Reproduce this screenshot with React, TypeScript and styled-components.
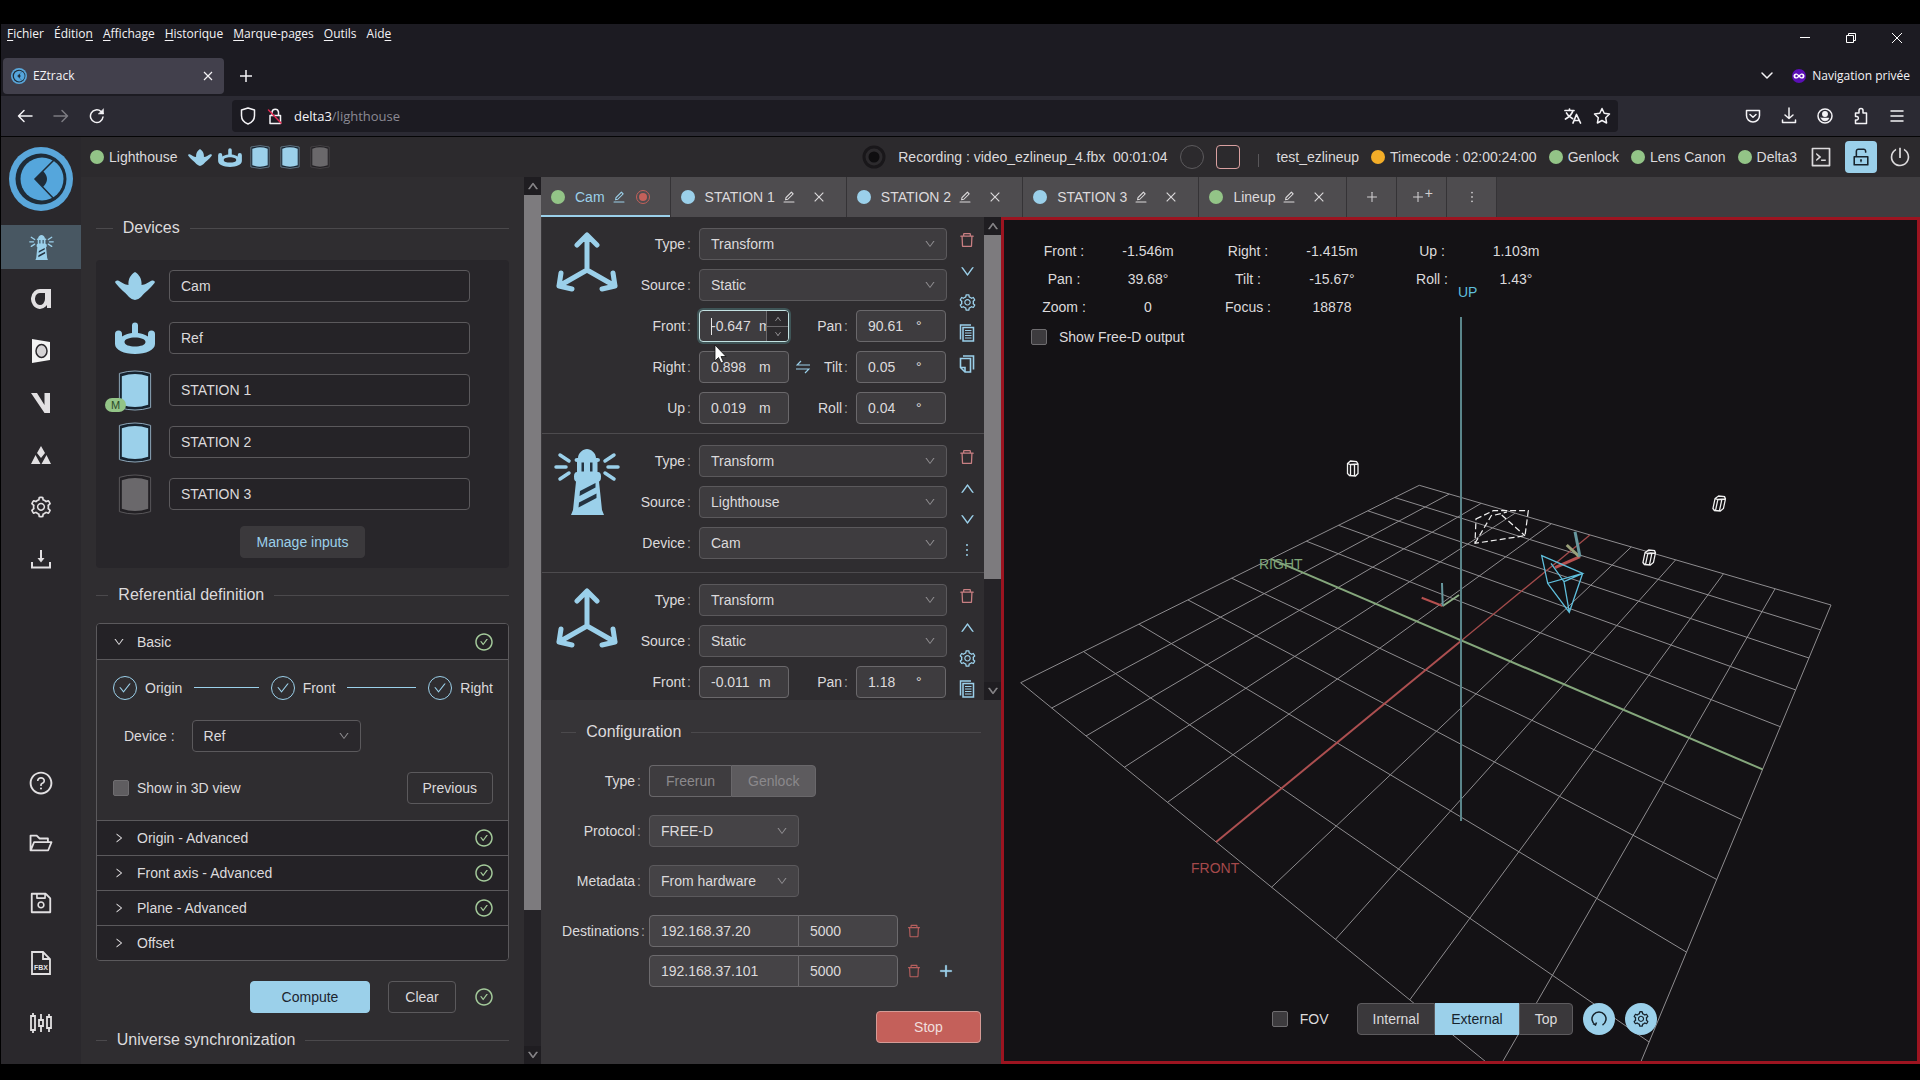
import React, { useState } from 'react';
import styled, { createGlobalStyle, css } from 'styled-components';
import {
  AiOutlineCheck, AiOutlineCheckCircle, AiOutlineClose, AiOutlineCode, AiOutlineDelete, AiOutlineDown,
  AiOutlineEdit, AiOutlineFolderOpen, AiOutlineMore, AiOutlinePlus, AiOutlinePoweroff,
  AiOutlineQuestionCircle, AiOutlineRight, AiOutlineSave, AiOutlineSetting, AiOutlineUnlock, AiOutlineUp,
} from 'react-icons/ai';

const c = {
  blue: '#9bd0ea',
  green: '#93c487',
  red: '#c4605a',
  pink: '#c97f82',
  text: '#dcdadc',
  panel: '#2f2d30',
  inset: '#28262a',
  side: '#2a282c',
  line: '#5b595c',
  field: '#3e3c3f',
  chrome: '#1c1b22',
  toolbar: '#2b2a33',
};

const GlobalStyle = createGlobalStyle`
  *, *::before, *::after { box-sizing: border-box; }
  body { margin: 0; background: #000; }
  button, input, select { font: inherit; color: inherit; margin: 0; }
  button { cursor: pointer; }
  a { color: inherit; text-decoration: none; }
`;

const Page = styled.div`
  height: 100vh;
  min-height: 720px;
  padding: 24px 0 16px 1px;
  display: flex;
  flex-direction: column;
  overflow: hidden;
  background: #000;
  color: ${c.text};
  font: 14px/20px "Liberation Sans", Arial, sans-serif;
`;

const plain = css`
  padding: 0;
  border: 0;
  background: none;
  display: inline-flex;
  align-items: center;
  justify-content: center;
`;

/* ---------- browser chrome ---------- */

const Chrome = styled.header`
  flex: none;
  background: ${c.chrome};
  color: #f4f3f6;
  font: 12px/16px "Open Sans", "Noto Sans", sans-serif;
`;
const MenuBar = styled.div`
  height: 32px;
  display: flex;
  justify-content: space-between;
`;
const Menus = styled.nav`
  display: flex;
  gap: 10px;
  padding: 2px 0 0 6px;
`;
const MenuButton = styled.button`
  ${plain}
  height: 16px;
  display: block;
  u { text-underline-offset: 2px; }
`;
const WindowButtons = styled.div`
  display: flex;
  button { ${plain} width: 46px; height: 28px; }
`;
const TabStrip = styled.div`
  height: 40px;
  display: flex;
  align-items: center;
  padding-left: 2px;
`;
const BrowserTab = styled.div`
  width: 221px;
  height: 36px;
  display: flex;
  align-items: center;
  gap: 6px;
  padding: 0 9px 0 8px;
  border-radius: 4px;
  background: #42404c;
  span { flex: 1; }
`;
const BareButton = styled.button`
  ${plain}
`;
const NewTab = styled(BareButton)`
  width: 32px;
  margin-left: 6px;
`;
const Private = styled.div`
  margin-left: auto;
  padding-right: 10px;
  display: flex;
  align-items: center;
  gap: 6px;
  button { margin-right: 12px; }
`;
const NavBar = styled.div`
  height: 41px;
  display: flex;
  align-items: center;
  background: ${c.toolbar};
  border-bottom: 1px solid #050506;
`;
const NavButtons = styled.div`
  width: 231px;
  display: flex;
  gap: 16px;
  padding-left: 14px;
`;
const NavButton = styled.button<{ $dim?: boolean }>`
  ${plain}
  width: 20px;
  height: 20px;
  opacity: ${p => (p.$dim ? 0.4 : 1)};
`;
const UrlBar = styled.div`
  flex: 1;
  height: 32px;
  display: flex;
  align-items: center;
  gap: 11px;
  padding: 0 7px 0 8px;
  border-radius: 4px;
  background: ${c.chrome};
  font-size: 13px;
  p { margin: 0; flex: 1; color: #8b8a94; }
  b { font-weight: 400; color: #f4f3f6; }
`;
const Extensions = styled.div`
  width: 302px;
  display: flex;
  gap: 16px;
  justify-content: flex-end;
  padding-right: 13px;
`;

/* ---------- app frame ---------- */

const AppFrame = styled.div`
  flex: 1;
  min-height: 0;
  display: flex;
  background: ${c.panel};
`;
const Sidebar = styled.nav`
  flex: none;
  width: 80px;
  display: flex;
  flex-direction: column;
  background: ${c.side};
`;
const Logo = styled.a`
  height: 84px;
  display: grid;
  place-items: center;
  margin-bottom: 4px;
`;
const SideItem = styled.a<{ $active?: boolean; $tall?: boolean }>`
  height: ${p => (p.$tall ? 60 : 52)}px;
  display: grid;
  place-items: center;
  color: #e2e0e2;
  ${p => p.$active && css`height: 44px; margin-bottom: 4px; color: ${c.blue}; background: #485762;`}
`;
const SideBottom = styled.div`
  margin-top: auto;
  padding-bottom: 11px;
`;
const Content = styled.div`
  flex: 1;
  min-width: 0;
  display: flex;
  flex-direction: column;
`;
const StatusBar = styled.div`
  flex: none;
  height: 40px;
  display: flex;
  align-items: center;
  justify-content: space-between;
  padding: 0 9px;
  background: #2c2a2d;
`;
const StatusGroup = styled.div<{ $gap: number }>`
  display: flex;
  align-items: center;
  gap: ${p => p.$gap}px;
`;
const DeviceSlot = styled.span`
  width: 24px;
  display: grid;
  place-items: center;
`;
const Dot = styled.i<{ $color: string }>`
  flex: none;
  width: 14px;
  height: 14px;
  border-radius: 50%;
  background: ${p => p.$color};
`;
const Status = styled.span<{ $lead?: boolean }>`
  display: flex;
  align-items: center;
  gap: 5px;
  margin-right: ${p => (p.$lead ? 4 : 0)}px;
`;
const RoundRec = styled.button`
  ${plain}
  width: 24px;
  height: 24px;
  border: 1px solid #5c5a5d;
  border-radius: 50%;
`;
const StopRec = styled(RoundRec)`
  border-color: #d9a0a0;
  border-radius: 4px;
`;
const Separator = styled.i`
  width: 1px;
  height: 13px;
  margin: 6px 6px 0;
  background: #59575a;
`;
const LockButton = styled.button`
  ${plain}
  width: 32px;
  height: 32px;
  border-radius: 4px;
  background: ${c.blue};
  color: #17232c;
`;
const Columns = styled.main`
  flex: 1;
  min-height: 0;
  display: flex;
`;

/* ---------- shared controls ---------- */

const ScrollRail = styled.div`
  flex: none;
  width: 17px;
  display: flex;
  flex-direction: column;
  justify-content: space-between;
  background: #252327;
  color: #8d8b8e;
  button { ${plain} height: 18px; background: #1f1d21; }
`;
const Track = styled.div`
  flex: 1;
`;
const Thumb = styled.div<{ $size: number }>`
  height: ${p => p.$size}%;
  background: #7d7b7e;
`;
const Rail = ({ size }: { size: number }) => (
  <ScrollRail>
    <button aria-label="Scroll up"><AiOutlineUp size={12} strokeWidth={60} /></button>
    <Track><Thumb $size={size} /></Track>
    <button aria-label="Scroll down"><AiOutlineDown size={12} strokeWidth={60} /></button>
  </ScrollRail>
);

const Divider = styled.h2`
  margin: 0;
  height: 24px;
  display: flex;
  align-items: center;
  gap: 10px;
  font: 16px/24px "Liberation Sans", Arial, sans-serif;
  white-space: nowrap;
  &::before, &::after { content: ''; height: 1px; background: #4b494c; }
  &::before { flex: 5 0 0; }
  &::after { flex: 95 0 0; }
`;
const box = css`
  height: 32px;
  border: 1px solid ${c.line};
  border-radius: 4px;
`;
const TextInput = styled.input`
  ${box}
  width: 100%;
  min-width: 0;
  padding: 0 11px;
  background: #252327;
  outline: none;
`;
const Button = styled.button<{ $kind?: 'primary' | 'danger' | 'soft'; $width?: number }>`
  ${box}
  padding: 0 15px;
  background: transparent;
  ${p => p.$width && css`width: ${p.$width}px;`}
  ${p => p.$kind === 'primary' && css`background: ${c.blue}; border-color: ${c.blue}; color: #1b2530;`}
  ${p => p.$kind === 'soft' && css`background: #3b393c; border-color: #3b393c; color: ${c.blue};`}
  ${p => p.$kind === 'danger' && css`background: ${c.red}; border-color: #d59b96; color: #f0dedd;`}
`;
const SelectWrap = styled.span<{ $width?: number; $bg: string }>`
  position: relative;
  display: block;
  color: ${c.text};
  width: ${p => (p.$width ? `${p.$width}px` : '100%')};
  select {
    ${box}
    display: block;
    width: 100%;
    padding: 0 30px 0 11px;
    appearance: none;
    background: ${p => p.$bg};
    outline: none;
  }
  svg { position: absolute; right: 11px; top: 10px; color: #8f8d90; pointer-events: none; }
`;
const Select = ({ id, value, options, width, bg = c.field }: { id: string; value: string; options?: string[]; width?: number; bg?: string }) => (
  <SelectWrap $width={width} $bg={bg}>
    <select id={id} defaultValue={value}>
      {(options || [value]).map(o => <option key={o}>{o}</option>)}
    </select>
    <AiOutlineDown size={12} />
  </SelectWrap>
);
const CheckLabel = styled.label<{ $gap?: number; $bg?: string }>`
  display: inline-flex;
  align-items: center;
  gap: ${p => p.$gap || 8}px;
  input {
    appearance: none;
    width: 16px;
    height: 16px;
    border: 1px solid #6f6d70;
    border-radius: 2px;
    background: ${p => p.$bg || '#5f5d60'};
  }
`;
const Colon = styled.span`
  margin-left: 2px;
  color: #a3a1a4;
`;

/* ---------- drawings ---------- */

const CamIcon = ({ w }: { w: number }) => (
  <svg width={w} height={Math.round(w * 0.7)} viewBox="0 0 40 28" fill={c.blue}>
    <path d="M20 0C25 3 27 8 26.500 13C30 13 34 10 37 8.500C39 8 40.500 9.500 39.500 11C35 17 30 20 26 25Q23 28 20 28Q17 28 14 25C10 20 5 17 .5 11C-.5 9.500 1 8 3 8.500C6 10 10 13 13.500 13C13 8 15 3 20 0Z" />
  </svg>
);
const RefIcon = ({ w }: { w: number }) => (
  <svg width={w} height={Math.round(w * 0.8)} viewBox="0 0 40 32" fill={c.blue} fillRule="evenodd">
    <path d="M0 12a3.500 3.500 0 0 1 7 0v2.500C10 12.500 13 11.500 17 11V3.500a3 3 0 0 1 6 0V11C27 11.500 30 12.500 33 14.500V12a3.500 3.500 0 0 1 7 0V22C40 28 31 32 20 32S0 28 0 22ZM9.500 20c0 3 5 4.500 10.500 4.500S30.500 23 30.500 20 25.500 15.500 20 15.500 9.500 17 9.500 20Z" />
  </svg>
);
const StationIcon = ({ w, off }: { w: number; off?: boolean }) => (
  <svg width={w} height={Math.round(w * 1.22)} viewBox="0 0 34 42">
    <path d="M1 3.500Q17-1.500 33 3.500V38.500Q17 43.500 1 38.500Z" fill={off ? '#222024' : '#17232f'} stroke={off ? '#59575a' : '#8fa9bb'} />
    <path d="M3.500 6.500Q17 1.500 30.500 6.500V35.500Q17 40.500 3.500 35.500Z" fill={off ? '#6a686b' : c.blue} />
  </svg>
);
const EzLogo = ({ size }: { size: number }) => (
  <svg width={size} height={size} viewBox="0 0 64 64">
    <circle cx="32" cy="32" r="32" fill="#5aa7db" />
    <circle cx="32" cy="32" r="25.500" fill="#1f2c38" />
    <circle cx="33" cy="32" r="21.500" fill="#55a6dc" />
    <path d="M45 13 26 32 45 52" fill="none" stroke="#1f2c38" strokeWidth="1.500" />
    <path d="M26 32 34 24Q42 32 34 40Z" fill="#1f2c38" />
  </svg>
);
const LighthouseIcon = ({ size }: { size: number }) => (
  <svg width={size} height={size} viewBox="0 0 66 66" fill="currentColor">
    <path d="M24 9C24 4 29 0 33 0S42 4 42 9H43.500Q46 9 46 11T43.500 13V23H44Q47 23 47 27.500T45 32.500L48 61 50 66H17L19 61 22 32.500Q20 32 20 27.500T23 23V13Q20.500 13 20.500 11T23 9Z" />
    <path d="M27.500 13.500H30V22.500H27.500ZM36 13.500H38.500V22.500H36ZM26 42 41.500 34V38.500L25.500 47ZM25 53.500 42.500 44.500V49L24.500 58.500Z" fill="#253340" />
    <path d="M2 18H12M6 6 15 12M6 30 15 24M54 18H64M60 6 51 12M60 30 51 24" stroke="currentColor" strokeWidth="3.500" strokeLinecap="round" />
  </svg>
);
const AxesIcon = () => (
  <svg width="62" height="60" viewBox="0 0 62 60" fill="none" stroke={c.blue} strokeWidth="5" strokeLinecap="round" strokeLinejoin="round">
    <path d="M31 38V4M21 13 31 3 41 13M31 38 3 54M5 41 3 54 16 57M31 38 59 54M57 41 59 54 46 57" />
  </svg>
);
const CopyIcon = () => (
  <svg width="18" height="18" viewBox="0 0 18 18" fill="none" stroke="currentColor" strokeWidth="1.500">
    <path d="M13 1H2.500V15.500" /><path d="M5 3.500H15.500V17H5Z" /><path d="M7 6.500H13.500M7 9H13.500M7 11.500H13.500M7 14H13.500" strokeWidth="1.200" />
  </svg>
);
const PasteIcon = () => (
  <svg width="18" height="18" viewBox="0 0 18 18" fill="none" stroke="currentColor" strokeWidth="1.600">
    <path d="M5 1H15.500V14.500" /><path d="M2.500 3.500H12.500V17H7L2.500 12.500Z" /><path d="M2.500 12.500H7V17" />
  </svg>
);
const SwapIcon = () => (
  <svg width="14" height="14" viewBox="0 0 14 14" fill="none" stroke={c.blue} strokeWidth="1.200">
    <path d="M14 5H1L5 1M0 9H13L9 13" />
  </svg>
);

/* ---------- left column ---------- */

const LeftColumn = styled.section`
  flex: none;
  width: 460px;
  display: flex;
`;
const LeftBody = styled.div`
  flex: 1;
  min-width: 0;
  overflow: hidden;
  padding: 39px 15px 0;
`;
const DeviceBox = styled.div`
  margin: 20px 0 15px;
  padding: 10px 39px 10px 11px;
  background: ${c.inset};
  border-radius: 4px;
`;
const DeviceRow = styled.label`
  display: grid;
  grid-template-columns: 56px 1fr;
  gap: 6px;
  align-items: center;
  height: 32px;
  margin-bottom: 20px;
`;
const DeviceIcon = styled.span`
  position: relative;
  height: 32px;
  display: flex;
  align-items: center;
  justify-content: center;
  svg { flex: none; }
`;
const Badge = styled.span`
  position: absolute;
  left: -2px;
  bottom: -6px;
  width: 21px;
  height: 14px;
  border-radius: 7px;
  background: ${c.green};
  color: #2c4a28;
  font-size: 11px;
  line-height: 15px;
  text-align: center;
`;
const Centered = styled.div`
  display: flex;
  justify-content: center;
  padding-left: 28px;
  margin-top: -4px;
`;
const Collapse = styled.div`
  margin-top: 16px;
  border: 1px solid ${c.line};
  border-radius: 4px;
  overflow: hidden;
`;
const CollapseHead = styled.button<{ $first?: boolean }>`
  width: 100%;
  height: 35px;
  display: flex;
  align-items: center;
  gap: 12px;
  padding: 0 14px 0 16px;
  border: 0;
  border-top: ${p => (p.$first ? 0 : 1)}px solid ${c.line};
  background: #242226;
  text-align: left;
  span { flex: 1; }
`;
const CollapseBody = styled.div`
  height: 161px;
  padding: 15px 15px 15px 16px;
  border-top: 1px solid ${c.line};
`;
const Steps = styled.ol`
  margin: 0 0 20px;
  padding: 0;
  height: 25px;
  display: grid;
  grid-template-columns: 1fr 1fr auto;
  align-items: center;
  list-style: none;
  li { display: flex; align-items: center; gap: 8px; }
`;
const StepMark = styled.i`
  width: 24px;
  height: 24px;
  display: grid;
  place-items: center;
  border: 1px solid ${c.blue};
  border-radius: 50%;
  color: ${c.blue};
`;
const StepLine = styled.i`
  flex: 1;
  height: 1px;
  margin: 0 12px 0 4px;
  background: ${c.blue};
`;
const DeviceSelect = styled.div`
  display: flex;
  align-items: center;
  gap: 17px;
  padding-left: 11px;
  margin-bottom: 20px;
`;
const SpreadRow = styled.div`
  display: flex;
  align-items: center;
  justify-content: space-between;
`;
const ComputeRow = styled.div`
  display: flex;
  align-items: center;
  justify-content: flex-end;
  gap: 18px;
  padding-right: 15px;
  margin: 20px 0 15px;
`;
const GreenCheck = styled(AiOutlineCheckCircle).attrs({ size: 20 })`
  color: #a3c99a;
`;

const devices = [
  { name: 'Cam', icon: <CamIcon w={40} /> },
  { name: 'Ref', icon: <RefIcon w={40} /> },
  { name: 'STATION 1', icon: <StationIcon w={34} />, badge: 'M' },
  { name: 'STATION 2', icon: <StationIcon w={34} /> },
  { name: 'STATION 3', icon: <StationIcon w={34} off /> },
];

const LeftPanel = () => (
  <LeftColumn>
    <LeftBody>
      <Divider>Devices</Divider>
      <DeviceBox>
        {devices.map(d => (
          <DeviceRow key={d.name}>
            <DeviceIcon>{d.icon}{d.badge && <Badge>{d.badge}</Badge>}</DeviceIcon>
            <TextInput aria-label={d.name} defaultValue={d.name} />
          </DeviceRow>
        ))}
        <Centered><Button $kind="soft" $width={125}>Manage inputs</Button></Centered>
      </DeviceBox>
      <Divider>Referential definition</Divider>
      <Collapse>
        <CollapseHead $first><AiOutlineDown size={12} /><span>Basic</span><GreenCheck /></CollapseHead>
        <CollapseBody>
          <Steps>
            <li><StepMark><AiOutlineCheck size={14} /></StepMark>Origin<StepLine /></li>
            <li><StepMark><AiOutlineCheck size={14} /></StepMark>Front<StepLine /></li>
            <li><StepMark><AiOutlineCheck size={14} /></StepMark>Right</li>
          </Steps>
          <DeviceSelect>
            <label htmlFor="ref-device">Device :</label>
            <Select id="ref-device" value="Ref" options={['Ref', 'Cam']} width={169} bg="#2a282c" />
          </DeviceSelect>
          <SpreadRow>
            <CheckLabel><input type="checkbox" />Show in 3D view</CheckLabel>
            <Button>Previous</Button>
          </SpreadRow>
        </CollapseBody>
        {['Origin - Advanced', 'Front axis - Advanced', 'Plane - Advanced', 'Offset'].map(t => (
          <CollapseHead key={t}>
            <AiOutlineRight size={12} /><span>{t}</span>{t !== 'Offset' && <GreenCheck />}
          </CollapseHead>
        ))}
      </Collapse>
      <ComputeRow>
        <Button $kind="primary" $width={120}>Compute</Button>
        <Button $width={68}>Clear</Button>
        <GreenCheck />
      </ComputeRow>
      <Divider>Universe synchronization</Divider>
    </LeftBody>
    <Rail size={84} />
  </LeftColumn>
);

/* ---------- tabs ---------- */

const Workspace = styled.section`
  flex: 1;
  min-width: 0;
  display: flex;
  flex-direction: column;
`;
const Tabs = styled.div`
  flex: none;
  height: 40px;
  display: flex;
  background: #3f3d40;
`;
const Tab = styled.div<{ $active?: boolean }>`
  display: flex;
  align-items: center;
  gap: 10px;
  padding: 0 20px 0 10px;
  background: #4e4c4f;
  border-right: 1px solid #353336;
  ${p => p.$active && css`color: ${c.blue}; box-shadow: inset 0 -2px ${c.blue};`}
`;
const EditButton = styled.button`
  ${plain}
  margin-left: -3px;
`;
const CloseButton = styled.button`
  ${plain}
  margin-left: 6px;
`;
const SmallTab = styled.button`
  ${plain}
  width: 50px;
  background: #4e4c4f;
  border-right: 1px solid #353336;
  color: #d2d0d2;
  sup { font-size: 14px; line-height: 8px; padding-bottom: 8px; }
`;
const LiveDot = styled.i`
  width: 14px;
  height: 14px;
  border: 1px solid ${c.red};
  border-radius: 50%;
  display: grid;
  place-items: center;
  &::after { content: ''; width: 8px; height: 8px; border-radius: 50%; background: ${c.red}; }
`;
const Split = styled.div`
  flex: 1;
  min-height: 0;
  display: flex;
`;

/* ---------- node column ---------- */

const NodeColumn = styled.div`
  flex: none;
  width: 460px;
  display: flex;
  flex-direction: column;
`;
const NodeScroll = styled.div`
  flex: 1;
  min-height: 0;
  display: flex;
`;
const NodeList = styled.div`
  flex: 1;
  overflow: hidden;
  border-left: 1px solid #3a383b;
`;
const Node = styled.article`
  display: grid;
  grid-template-columns: 91px 1fr 37px;
  min-height: 139px;
  padding: 11px 0 9px;
  border-bottom: 1px solid #4d4b4e;
`;
const NodeArt = styled.div`
  display: flex;
  justify-content: center;
  align-items: flex-start;
  padding: 4px 2px 0 0;
  color: ${c.blue};
`;
const NodeForm = styled.div`
  display: flex;
  flex-direction: column;
  gap: 9px;
`;
const Row = styled.div`
  display: grid;
  grid-template-columns: 58px 1fr;
  gap: 8px;
  align-items: center;
  label { text-align: right; }
`;
const Pair = styled.div`
  display: grid;
  grid-template-columns: 90px 1fr 90px;
  align-items: center;
  padding-right: 1px;
`;
const PairLabel = styled.div`
  display: flex;
  align-items: center;
  padding: 0 8px 0 7px;
  label { margin-left: auto; }
`;
const Actions = styled.div`
  display: flex;
  flex-direction: column;
  align-items: center;
  gap: 13px;
  padding: 3px 0 0 3px;
  height: 100px;
`;
const Action = styled.button<{ $danger?: boolean }>`
  ${plain}
  flex: none;
  height: 18px;
  color: ${p => (p.$danger ? c.pink : c.blue)};
`;
const Field = styled.div<{ $focus?: boolean }>`
  ${box}
  position: relative;
  display: flex;
  align-items: center;
  overflow: ${p => (p.$focus ? 'visible' : 'hidden')};
  background: ${c.field};
  border-color: #6a686b;
  input {
    width: 59px;
    height: 30px;
    padding: 0 0 0 11px;
    border: 0;
    outline: 0;
    background: transparent;
  }
  ${p => p.$focus && css`
    border-color: #c3e2e2;
    box-shadow: 0 0 0 2px #3f5557;
    &::after { content: ''; position: absolute; left: 11px; top: 7px; width: 1px; height: 17px; background: #e6e6e6; }
  `}
`;
const Stepper = styled.span`
  position: absolute;
  right: 0;
  top: 0;
  width: 22px;
  height: 30px;
  display: grid;
  grid-template-rows: 1fr 1fr;
  border-left: 1px solid #6a686b;
  border-radius: 0 3px 3px 0;
  background: #2c2a2d;
  color: #a5a3a6;
  button { ${plain} }
  button + button { border-top: 1px solid #6a686b; }
`;
const NumberField = ({ id, value, unit, focus }: { id: string; value: string; unit: string; focus?: boolean }) => (
  <Field $focus={focus}>
    <input id={id} defaultValue={value} />{unit}
    {focus && (
      <Stepper>
        <button aria-label="Increase"><AiOutlineUp size={8} /></button>
        <button aria-label="Decrease"><AiOutlineDown size={8} /></button>
      </Stepper>
    )}
  </Field>
);
const Cursor = styled.svg`
  position: absolute;
  left: 15px;
  top: 34px;
  z-index: 2;
`;
const CursorHost = styled.div`
  position: relative;
`;

type PairSpec = [string, string, string, string];

const StaticPairs = ({ id, rows, focus }: { id: string; rows: PairSpec[]; focus?: boolean }) => (
  <>
    {rows.map(([a, av, b, bv], i) => (
      <Row key={a}>
        <label htmlFor={`${id}-${a}`}>{a}<Colon>:</Colon></label>
        <Pair>
          <CursorHost>
            <NumberField id={`${id}-${a}`} value={av} unit="m" focus={focus && i === 0} />
            {focus && i === 0 && (
              <Cursor width="13" height="20" viewBox="0 0 13 20">
                <path d="M1 1V17L4.500 13.500 7 19 9.500 18 7 12.500H12Z" fill="#fff" stroke="#111" strokeWidth=".8" />
              </Cursor>
            )}
          </CursorHost>
          <PairLabel>
            {a === 'Right' && <BareButton aria-label="Swap"><SwapIcon /></BareButton>}
            <label htmlFor={`${id}-${b}`}>{b}<Colon>:</Colon></label>
          </PairLabel>
          <NumberField id={`${id}-${b}`} value={bv} unit="°" />
        </Pair>
      </Row>
    ))}
  </>
);

const SelectRow = ({ id, label, value }: { id: string; label: string; value: string }) => (
  <Row>
    <label htmlFor={id}>{label}<Colon>:</Colon></label>
    <Select id={id} value={value} />
  </Row>
);

const NodePanel = () => (
  <NodeScroll>
    <NodeList>
      <Node>
        <NodeArt><AxesIcon /></NodeArt>
        <NodeForm>
          <SelectRow id="n1-type" label="Type" value="Transform" />
          <SelectRow id="n1-source" label="Source" value="Static" />
          <StaticPairs id="n1" focus rows={[
            ['Front', '-0.647', 'Pan', '90.61'],
            ['Right', '0.898', 'Tilt', '0.05'],
            ['Up', '0.019', 'Roll', '0.04'],
          ]} />
        </NodeForm>
        <Actions>
          <Action $danger aria-label="Delete"><AiOutlineDelete size={18} /></Action>
          <Action aria-label="Move down"><AiOutlineDown size={17} /></Action>
          <Action aria-label="Settings"><AiOutlineSetting size={19} /></Action>
          <Action aria-label="Copy"><CopyIcon /></Action>
          <Action aria-label="Paste"><PasteIcon /></Action>
        </Actions>
      </Node>
      <Node>
        <NodeArt><LighthouseIcon size={66} /></NodeArt>
        <NodeForm>
          <SelectRow id="n2-type" label="Type" value="Transform" />
          <SelectRow id="n2-source" label="Source" value="Lighthouse" />
          <SelectRow id="n2-device" label="Device" value="Cam" />
        </NodeForm>
        <Actions>
          <Action $danger aria-label="Delete"><AiOutlineDelete size={18} /></Action>
          <Action aria-label="Move up"><AiOutlineUp size={17} /></Action>
          <Action aria-label="Move down"><AiOutlineDown size={17} /></Action>
          <Action aria-label="More"><AiOutlineMore size={18} /></Action>
        </Actions>
      </Node>
      <Node>
        <NodeArt><AxesIcon /></NodeArt>
        <NodeForm>
          <SelectRow id="n3-type" label="Type" value="Transform" />
          <SelectRow id="n3-source" label="Source" value="Static" />
          <StaticPairs id="n3" rows={[['Front', '-0.011', 'Pan', '1.18']]} />
        </NodeForm>
        <Actions>
          <Action $danger aria-label="Delete"><AiOutlineDelete size={18} /></Action>
          <Action aria-label="Move up"><AiOutlineUp size={17} /></Action>
          <Action aria-label="Settings"><AiOutlineSetting size={19} /></Action>
          <Action aria-label="Copy"><CopyIcon /></Action>
        </Actions>
      </Node>
    </NodeList>
    <Rail size={77} />
  </NodeScroll>
);

/* ---------- configuration ---------- */

const Config = styled.section`
  flex: none;
  padding: 20px 20px 21px;
  background: #363437;
`;
const ConfigForm = styled.div`
  display: grid;
  gap: 18px;
  margin: 21px 0 24px;
`;
const ConfigRow = styled.div`
  display: grid;
  grid-template-columns: 84px 1fr;
  gap: 4px;
  align-items: start;
`;
const ConfigLabel = styled.label<{ $wide?: boolean }>`
  line-height: 32px;
  text-align: right;
  padding-right: ${p => (p.$wide ? 0 : 4)}px;
  white-space: nowrap;
`;
const Segments = styled.div`
  display: flex;
`;
const Segment = styled.button<{ $on?: boolean }>`
  height: 32px;
  padding: 0 16px;
  border: 1px solid #69676a;
  background: ${p => (p.$on ? '#5d5b5e' : '#3e3c3f')};
  color: #8b898c;
  &:first-child { border-radius: 4px 0 0 4px; border-right: 0; }
  &:last-child { border-radius: 0 4px 4px 0; }
`;
const Destinations = styled.div`
  display: grid;
  gap: 8px;
`;
const Destination = styled.div`
  display: flex;
  align-items: center;
  input { ${box} background: #454346; border-color: #6c6a6d; padding: 0 11px; outline: none; }
  input:first-child { width: 150px; border-radius: 4px 0 0 4px; }
  input:nth-child(2) { width: 100px; margin-left: -1px; border-radius: 0 4px 4px 0; }
`;
const DestAction = styled.button<{ $add?: boolean }>`
  ${plain}
  width: 32px;
  color: ${p => (p.$add ? c.blue : '#b85f5e')};
`;
const End = styled.div`
  display: flex;
  justify-content: flex-end;
`;

const ConfigPanel = () => (
  <Config>
    <Divider>Configuration</Divider>
    <ConfigForm>
      <ConfigRow>
        <ConfigLabel as="span">Type<Colon>:</Colon></ConfigLabel>
        <Segments><Segment disabled>Freerun</Segment><Segment disabled $on>Genlock</Segment></Segments>
      </ConfigRow>
      <ConfigRow>
        <ConfigLabel htmlFor="protocol">Protocol<Colon>:</Colon></ConfigLabel>
        <Select id="protocol" value="FREE-D" width={150} bg="#454346" />
      </ConfigRow>
      <ConfigRow>
        <ConfigLabel htmlFor="metadata">Metadata<Colon>:</Colon></ConfigLabel>
        <Select id="metadata" value="From hardware" width={150} bg="#454346" />
      </ConfigRow>
      <ConfigRow>
        <ConfigLabel as="span" $wide>Destinations<Colon>:</Colon></ConfigLabel>
        <Destinations>
          {['192.168.37.20', '192.168.37.101'].map((ip, i) => (
            <Destination key={ip}>
              <input aria-label="Address" defaultValue={ip} />
              <input aria-label="Port" defaultValue="5000" />
              <DestAction aria-label="Remove"><AiOutlineDelete size={16} /></DestAction>
              {i === 1 && <DestAction $add aria-label="Add"><AiOutlinePlus size={16} strokeWidth={50} /></DestAction>}
            </Destination>
          ))}
        </Destinations>
      </ConfigRow>
    </ConfigForm>
    <End><Button $kind="danger" $width={105}>Stop</Button></End>
  </Config>
);

/* ---------- 3D view ---------- */

const View = styled.section`
  flex: 1;
  min-width: 0;
  position: relative;
  display: flex;
  flex-direction: column;
  justify-content: space-between;
  background: #141215;
  border: 3px solid #9c1420;
`;
const Scene = styled.svg`
  position: absolute;
  inset: 0;
  width: 100%;
  height: 100%;
`;
const Hud = styled.div`
  position: relative;
  padding: 21px 18px;
`;
const Readout = styled.dl`
  margin: 0;
  display: grid;
  grid-template-columns: repeat(3, 168px);
  column-gap: 16px;
  row-gap: 8px;
  div { display: grid; grid-template-columns: 1fr 1fr; text-align: center; }
  dd { margin: 0; }
`;
const HudCheck = styled.div`
  padding: 10px 9px;
`;
const ViewBar = styled.div`
  position: relative;
  display: flex;
  align-items: center;
  justify-content: center;
  gap: 10px;
  padding: 0 0 26px 8px;
`;
const ViewModes = styled.div`
  display: flex;
  margin: 0 0 0 18px;
`;
const Mode = styled.button<{ $on?: boolean }>`
  height: 32px;
  padding: 0 15px;
  border: 1px solid ${p => (p.$on ? c.blue : '#5d5b5e')};
  background: ${p => (p.$on ? c.blue : '#3a383b')};
  color: ${p => (p.$on ? '#17232c' : c.text)};
  &:first-child { border-radius: 4px 0 0 4px; }
  &:last-child { border-radius: 0 4px 4px 0; }
`;
const RoundButton = styled.button`
  ${plain}
  width: 32px;
  height: 32px;
  border-radius: 50%;
  background: ${c.blue};
  color: #17232c;
`;

/* Perspective mapping of the unit square on the four corners of the floor. */
const corners = [[1020.7, 682.7], [1601.6, 1156.2], [1831, 605], [1419.3, 485.3]];
const project = (u: number, v: number) => {
  const [[x0, y0], [x1, y1], [x2, y2], [x3, y3]] = corners;
  const dx1 = x1 - x2, dx2 = x3 - x2, sx = x0 - x1 + x2 - x3;
  const dy1 = y1 - y2, dy2 = y3 - y2, sy = y0 - y1 + y2 - y3;
  const det = dx1 * dy2 - dx2 * dy1;
  const g = (sx * dy2 - dx2 * sy) / det;
  const h = (dx1 * sy - sx * dy1) / det;
  const w = g * u + h * v + 1;
  return [
    ((x1 - x0 + g * x1) * u + (x3 - x0 + h * x3) * v + x0) / w,
    ((y1 - y0 + g * y1) * u + (y3 - y0 + h * y3) * v + y0) / w,
  ];
};
const segment = (a: number[], b: number[]) => `M${a[0].toFixed(1)} ${a[1].toFixed(1)}L${b[0].toFixed(1)} ${b[1].toFixed(1)}`;
const floor = Array.from({ length: 11 }, (_, i) => i / 10).filter(t => t !== 0.5)
  .map(t => segment(project(t, 0), project(t, 1)) + segment(project(0, t), project(1, t))).join('');

const Beacon = ({ x, y, lean }: { x: number; y: number; lean: number }) => (
  <g transform={`translate(${x} ${y}) skewX(${lean})`} fill="none" stroke="#f2f2f2" strokeWidth="1.300">
    <path d="M-5-5-2-7.500 4-7 5.500-4.500V5L3 7.500-3 7-5 5ZM-5-5-2-4 5.500-4.500M-2-4V7M2-4V7" />
  </g>
);

const FloorScene = () => (
  <Scene viewBox="1004 220 913 841" preserveAspectRatio="xMidYMid slice" fill="none">
    <path d={floor} stroke="#8e8c8f" strokeWidth="1" />
    <path d={segment(project(0.5, 0.5), project(0.5, 1))} stroke="#a34b4b" strokeWidth="1.300" />
    <path d={segment(project(0.5, 0), project(0.5, 0.5))} stroke="#ac4f50" strokeWidth="2" />
    <path d={segment(project(0, 0.5), project(1, 0.5))} stroke="#85a77c" strokeWidth="2" />
    <path d="M1461 317V821" stroke="#5b868b" strokeWidth="2" />
    <path d="M1476 519 1493.300 510.700H1528.300L1525 535.700 1475 543.300ZM1475 543.300 1491.700 515M1501.700 515 1525 535.700M1495 515 1507 512" stroke="#f0f0f0" strokeWidth="1.200" strokeDasharray="6 3" />
    <g strokeWidth="2">
      <path d="M1421.700 597.700 1442.700 606" stroke="#b5504f" />
      <path d="M1442.700 606 1459 595" stroke="#8fb087" />
      <path d="M1442 583 1442.700 606" stroke="#67979e" />
      <path d="M1580 556.700 1555 567.700" stroke="#b5504f" strokeWidth="3" />
      <path d="M1566.700 545 1579.300 556.700" stroke="#9aa07a" strokeWidth="3" />
      <path d="M1575 531.700 1580 556.700" stroke="#67979e" strokeWidth="3" />
    </g>
    <path d="M1541.700 555.700 1582.700 573.300 1547.700 583.300ZM1547.700 583.300 1569.300 612.300 1582.700 573.300M1551 563.300 1564 581.700 1569.300 612.300M1564 581.700 1582.700 573.300" stroke="#5fbfdc" strokeWidth="1.300" />
    <Beacon x={1352.500} y={468.500} lean={0} />
    <Beacon x={1719} y={503.500} lean={-12} />
    <Beacon x={1649} y={557.500} lean={-12} />
    <g fontFamily="Liberation Sans, Arial, sans-serif" fontSize="14">
      <text x="1458" y="297" fill="#5fbfdc">UP</text>
      <text x="1259" y="569" fill="#7fa578">RIGHT</text>
      <text x="1191" y="873" fill="#a4494b">FRONT</text>
    </g>
  </Scene>
);

const readings = [
  ['Front', '-1.546m'], ['Right', '-1.415m'], ['Up', '1.103m'],
  ['Pan', '39.68°'], ['Tilt', '-15.67°'], ['Roll', '1.43°'],
  ['Zoom', '0'], ['Focus', '18878'],
];

const View3D = () => {
  const [mode, setMode] = useState('External');
  return (
    <View>
      <FloorScene />
      <Hud>
        <Readout>
          {readings.map(([k, v]) => <div key={k}><dt>{k} :</dt><dd>{v}</dd></div>)}
        </Readout>
        <HudCheck><CheckLabel $gap={12} $bg="#3d3b3e"><input type="checkbox" />Show Free-D output</CheckLabel></HudCheck>
      </Hud>
      <ViewBar>
        <CheckLabel $gap={12} $bg="#3d3b3e"><input type="checkbox" />FOV</CheckLabel>
        <ViewModes>
          {['Internal', 'External', 'Top'].map(m => (
            <Mode key={m} $on={mode === m} onClick={() => setMode(m)}>{m}</Mode>
          ))}
        </ViewModes>
        <RoundButton aria-label="Reset view">
          <svg width="18" height="18" viewBox="0 0 18 18" fill="none" stroke="currentColor" strokeWidth="1.500">
            <path d="M5.500 15A7 7 0 1 1 12.500 15M3 13.500 5.500 15 6.500 12.500" />
          </svg>
        </RoundButton>
        <RoundButton aria-label="View settings"><AiOutlineSetting size={18} /></RoundButton>
      </ViewBar>
    </View>
  );
};

/* ---------- page ---------- */

const menus: [string, string, string][] = [
  ['', 'F', 'ichier'], ['Éditio', 'n', ''], ['', 'A', 'ffichage'], ['', 'H', 'istorique'],
  ['', 'M', 'arque-pages'], ['', 'O', 'utils'], ['Aid', 'e', ''],
];
const line = { fill: 'none', stroke: 'currentColor', strokeWidth: 1.5, strokeLinecap: 'round', strokeLinejoin: 'round' } as const;

const Browser = () => (
  <Chrome>
    <MenuBar>
      <Menus>{menus.map(([a, b, d]) => <MenuButton key={a + b + d}>{a}<u>{b}</u>{d}</MenuButton>)}</Menus>
      <WindowButtons>
        <button aria-label="Minimize"><svg width="10" height="10"><path d="M0 4.500H10" stroke="#fff" /></svg></button>
        <button aria-label="Restore"><svg width="10" height="10" fill="none" stroke="#fff"><path d="M.5 2.500H7.500V9.500H.5ZM2.500 2.500V.5H9.500V7.500H7.500" /></svg></button>
        <button aria-label="Close"><svg width="10" height="10" stroke="#fff"><path d="M0 0 10 10M10 0 0 10" /></svg></button>
      </WindowButtons>
    </MenuBar>
    <TabStrip>
      <BrowserTab>
        <EzLogo size={16} /><span>EZtrack</span>
        <BareButton aria-label="Close tab"><svg width="14" height="10" viewBox="-2 0 14 10" stroke="#f4f3f6" strokeWidth="1.200"><path d="M1 1 9 9M9 1 1 9" /></svg></BareButton>
      </BrowserTab>
      <NewTab aria-label="New tab"><svg width="12" height="12" stroke="#f4f3f6" strokeWidth="1.500"><path d="M6 0V12M0 6H12" /></svg></NewTab>
      <Private>
        <BareButton aria-label="List tabs"><svg width="14" height="10" viewBox="0 0 14 10" {...line}><path d="M2 2 7 7 12 2" /></svg></BareButton>
        <svg width="14" height="14" viewBox="0 0 14 14"><circle cx="7" cy="7" r="7" fill="#5a0fb5" /><path d="M7 6C5 3.500 1.500 4 1.500 7S5 10.500 7 8C9 10.500 12.500 10 12.500 7S9 3.500 7 6Z" fill="#fff" /><circle cx="4.500" cy="7" r="1.200" fill="#5a0fb5" /><circle cx="9.500" cy="7" r="1.200" fill="#5a0fb5" /></svg>
        <span>Navigation privée</span>
      </Private>
    </TabStrip>
    <NavBar>
      <NavButtons>
        <NavButton aria-label="Back"><svg width="16" height="16" viewBox="0 0 16 16" {...line}><path d="M15 8H1.500M7 2.500 1.500 8 7 13.500" /></svg></NavButton>
        <NavButton $dim aria-label="Forward"><svg width="16" height="16" viewBox="0 0 16 16" {...line}><path d="M1 8H14.500M9 2.500 14.500 8 9 13.500" /></svg></NavButton>
        <NavButton aria-label="Reload"><svg width="16" height="16" viewBox="0 0 16 16" {...line}><path d="M14 9A6.300 6.300 0 1 1 12 3.500L14 5.500" /><path d="M14.500 1V6H9.500Z" fill="currentColor" strokeWidth=".5" /></svg></NavButton>
      </NavButtons>
      <UrlBar>
        <svg width="16" height="18" viewBox="0 0 16 18" {...line}><path d="M8 1 14.500 3V8.500C14.500 12.500 12 15.500 8 17 4 15.500 1.500 12.500 1.500 8.500V3Z" /></svg>
        <svg width="16" height="18" viewBox="0 0 16 18" {...line}><path d="M3 8.500H13.500V16.500H3ZM5 8.500V5A3.300 3.300 0 0 1 11.500 5V8.500" /><path d="M1.500 3 14 16" stroke="#e22850" /></svg>
        <p><b>delta3</b>/lighthouse</p>
        <svg width="18" height="16" viewBox="0 0 18 16" {...line}><path d="M1 2.500H10M5.500 1V2.500M2.500 5C4 8.500 6.500 9.500 8.500 10.500M9 2.500C8 6.500 5 9 1.500 11M9 15 12.500 6.500 16.500 15M10.500 12.500H15" strokeWidth="1.700" /></svg>
        <svg width="18" height="18" viewBox="0 0 18 18" {...line}><path d="M9 1.500 11.200 6.300 16.500 7 12.700 10.700 13.600 16 9 13.500 4.400 16 5.300 10.700 1.500 7 6.800 6.300Z" /></svg>
      </UrlBar>
      <Extensions>
        <NavButton aria-label="Pocket"><svg width="16" height="16" viewBox="0 0 16 16" {...line}><path d="M1.500 2.500H14.500V7.500A6.500 6.500 0 0 1 1.500 7.500ZM5 6.500 8 9.300 11 6.500" /></svg></NavButton>
        <NavButton aria-label="Downloads"><svg width="16" height="18" viewBox="0 0 16 18" {...line}><path d="M8 1V11.500M4 8 8 11.500 12 8M1.500 13V15.500H14.500V13" /></svg></NavButton>
        <NavButton aria-label="Account"><svg width="16" height="16" viewBox="0 0 16 16" {...line}><circle cx="8" cy="8" r="7" /><circle cx="8" cy="6" r="2.200" fill="currentColor" /><path d="M4 10H12Q11 13 8 13T4 10Z" fill="currentColor" strokeWidth=".5" /></svg></NavButton>
        <NavButton aria-label="Extensions"><svg width="16" height="18" viewBox="0 0 16 18" {...line}><path d="M2.500 6H6V3.500A2 2 0 0 1 10 3.500V6H13.500V16.500H2.500V13H4A1.800 1.800 0 0 0 4 9.500H2.500Z" /></svg></NavButton>
        <NavButton aria-label="Menu"><svg width="16" height="16" viewBox="0 0 16 16" {...line}><path d="M2 3H14M2 8H14M2 13H14" /></svg></NavButton>
      </Extensions>
    </NavBar>
  </Chrome>
);

const SideNav = () => (
  <Sidebar>
    <Logo href="#home" aria-label="EZtrack"><EzLogo size={64} /></Logo>
    <SideItem $active href="#lighthouse" aria-label="Lighthouse"><LighthouseIcon size={25} /></SideItem>
    <SideItem href="#antilatency" aria-label="Antilatency">
      <svg width="20" height="22" viewBox="0 0 20 22" fill="none" stroke="currentColor" strokeWidth="4"><path d="M20 3H10A7 8 0 1 0 16 11V5M18 3V20" /></svg>
    </SideItem>
    <SideItem href="#optitrack" aria-label="Camera">
      <svg width="18" height="24" viewBox="0 0 18 24"><path d="M0 0 18 3V21L0 24Z" fill="#f4f4f4" /><ellipse cx="9.500" cy="12" rx="5.500" ry="6.500" fill="#d5d3d5" stroke="#2a282c" strokeWidth="1.500" /></svg>
    </SideItem>
    <SideItem href="#vicon" aria-label="Vicon">
      <svg width="20" height="20" viewBox="0 0 20 20" fill="currentColor"><path d="M0 0H6L13.500 12V0H19V20H13.500Z" /></svg>
    </SideItem>
    <SideItem href="#stype" aria-label="Tracking">
      <svg width="20" height="18" viewBox="0 0 20 18" fill="currentColor"><path d="M10 0 14 7 10 12 6 7ZM4.500 9 9.500 18H0ZM15.500 9 20 18H10.500Z" /></svg>
    </SideItem>
    <SideItem href="#settings" aria-label="Settings"><AiOutlineSetting size={24} /></SideItem>
    <SideItem href="#export" aria-label="Export">
      <svg width="20" height="20" viewBox="0 0 20 20" fill="none" stroke="currentColor" strokeWidth="2"><path d="M10 1V12M1 13V18.500H19V13" /><path d="M6.500 9H13.500L10 13.500Z" fill="currentColor" stroke="none" /></svg>
    </SideItem>
    <SideBottom>
      <SideItem $tall href="#help" aria-label="Help"><AiOutlineQuestionCircle size={26} /></SideItem>
      <SideItem $tall href="#open" aria-label="Open"><AiOutlineFolderOpen size={26} /></SideItem>
      <SideItem $tall href="#save" aria-label="Save"><AiOutlineSave size={26} /></SideItem>
      <SideItem $tall href="#fbx" aria-label="FBX">
        <svg width="20" height="24" viewBox="0 0 20 24" fill="none" stroke="currentColor" strokeWidth="1.800"><path d="M1 1H12L19 8V23H1ZM12 1V8H19" /><text x="10" y="18.500" textAnchor="middle" fontSize="7" fontWeight="700" fontFamily="Liberation Sans, Arial, sans-serif" fill="currentColor" stroke="none">FBX</text></svg>
      </SideItem>
      <SideItem $tall href="#levels" aria-label="Levels">
        <svg width="24" height="20" viewBox="0 0 24 20" fill="none" stroke="currentColor" strokeWidth="1.800"><path d="M4 0V3M4 17V20M2 3H6V17H2ZM12 1V7M12 13V19M10 7H14V13H10ZM20 1V4M20 15V19M18 4H22V15H18Z" /></svg>
      </SideItem>
    </SideBottom>
  </Sidebar>
);

const Header = () => (
  <StatusBar>
    <StatusGroup $gap={6}>
      <Status $lead><Dot $color={c.green} />Lighthouse</Status>
      <DeviceSlot><CamIcon w={24} /></DeviceSlot>
      <DeviceSlot><RefIcon w={24} /></DeviceSlot>
      <DeviceSlot><StationIcon w={20} /></DeviceSlot>
      <DeviceSlot><StationIcon w={20} /></DeviceSlot>
      <DeviceSlot><StationIcon w={20} off /></DeviceSlot>
    </StatusGroup>
    <StatusGroup $gap={12}>
      <svg width="24" height="24" viewBox="0 0 24 24"><circle cx="12" cy="12" r="10" fill="none" stroke="#19171a" strokeWidth="3" /><circle cx="12" cy="12" r="5.500" fill="#0f0e10" /></svg>
      <span>Recording : video_ezlineup_4.fbx&nbsp; 00:01:04</span>
      <RoundRec aria-label="Record" />
      <StopRec aria-label="Stop recording" />
      <Separator />
      <span>test_ezlineup</span>
      <Status><Dot $color="#f3ad28" />Timecode : 02:00:24:00</Status>
      <Status><Dot $color={c.green} />Genlock</Status>
      <Status><Dot $color={c.green} />Lens Canon</Status>
      <Status><Dot $color={c.green} />Delta3</Status>
      <BareButton aria-label="Console"><AiOutlineCode size={24} /></BareButton>
      <LockButton aria-label="Unlock"><AiOutlineUnlock size={22} /></LockButton>
      <BareButton aria-label="Power"><AiOutlinePoweroff size={22} /></BareButton>
    </StatusGroup>
  </StatusBar>
);

const TabBar = () => (
  <Tabs>
    <Tab $active>
      <Dot $color={c.green} />Cam
      <EditButton aria-label="Rename"><AiOutlineEdit size={14} /></EditButton><LiveDot />
    </Tab>
    {['STATION 1', 'STATION 2', 'STATION 3', 'Lineup'].map(t => (
      <Tab key={t}>
        <Dot $color={t === 'Lineup' ? c.green : c.blue} />{t}
        <EditButton aria-label="Rename"><AiOutlineEdit size={14} /></EditButton>
        <CloseButton aria-label="Close"><AiOutlineClose size={14} /></CloseButton>
      </Tab>
    ))}
    <SmallTab aria-label="Add"><AiOutlinePlus size={14} /></SmallTab>
    <SmallTab aria-label="Add several"><AiOutlinePlus size={14} /><sup>+</sup></SmallTab>
    <SmallTab aria-label="More"><AiOutlineMore size={16} /></SmallTab>
  </Tabs>
);

export default function App() {
  return (
    <Page>
      <GlobalStyle />
      <Browser />
      <AppFrame>
        <SideNav />
        <Content>
          <Header />
          <Columns>
            <LeftPanel />
            <Workspace>
              <TabBar />
              <Split>
                <NodeColumn>
                  <NodePanel />
                  <ConfigPanel />
                </NodeColumn>
                <View3D />
              </Split>
            </Workspace>
          </Columns>
        </Content>
      </AppFrame>
    </Page>
  );
}
